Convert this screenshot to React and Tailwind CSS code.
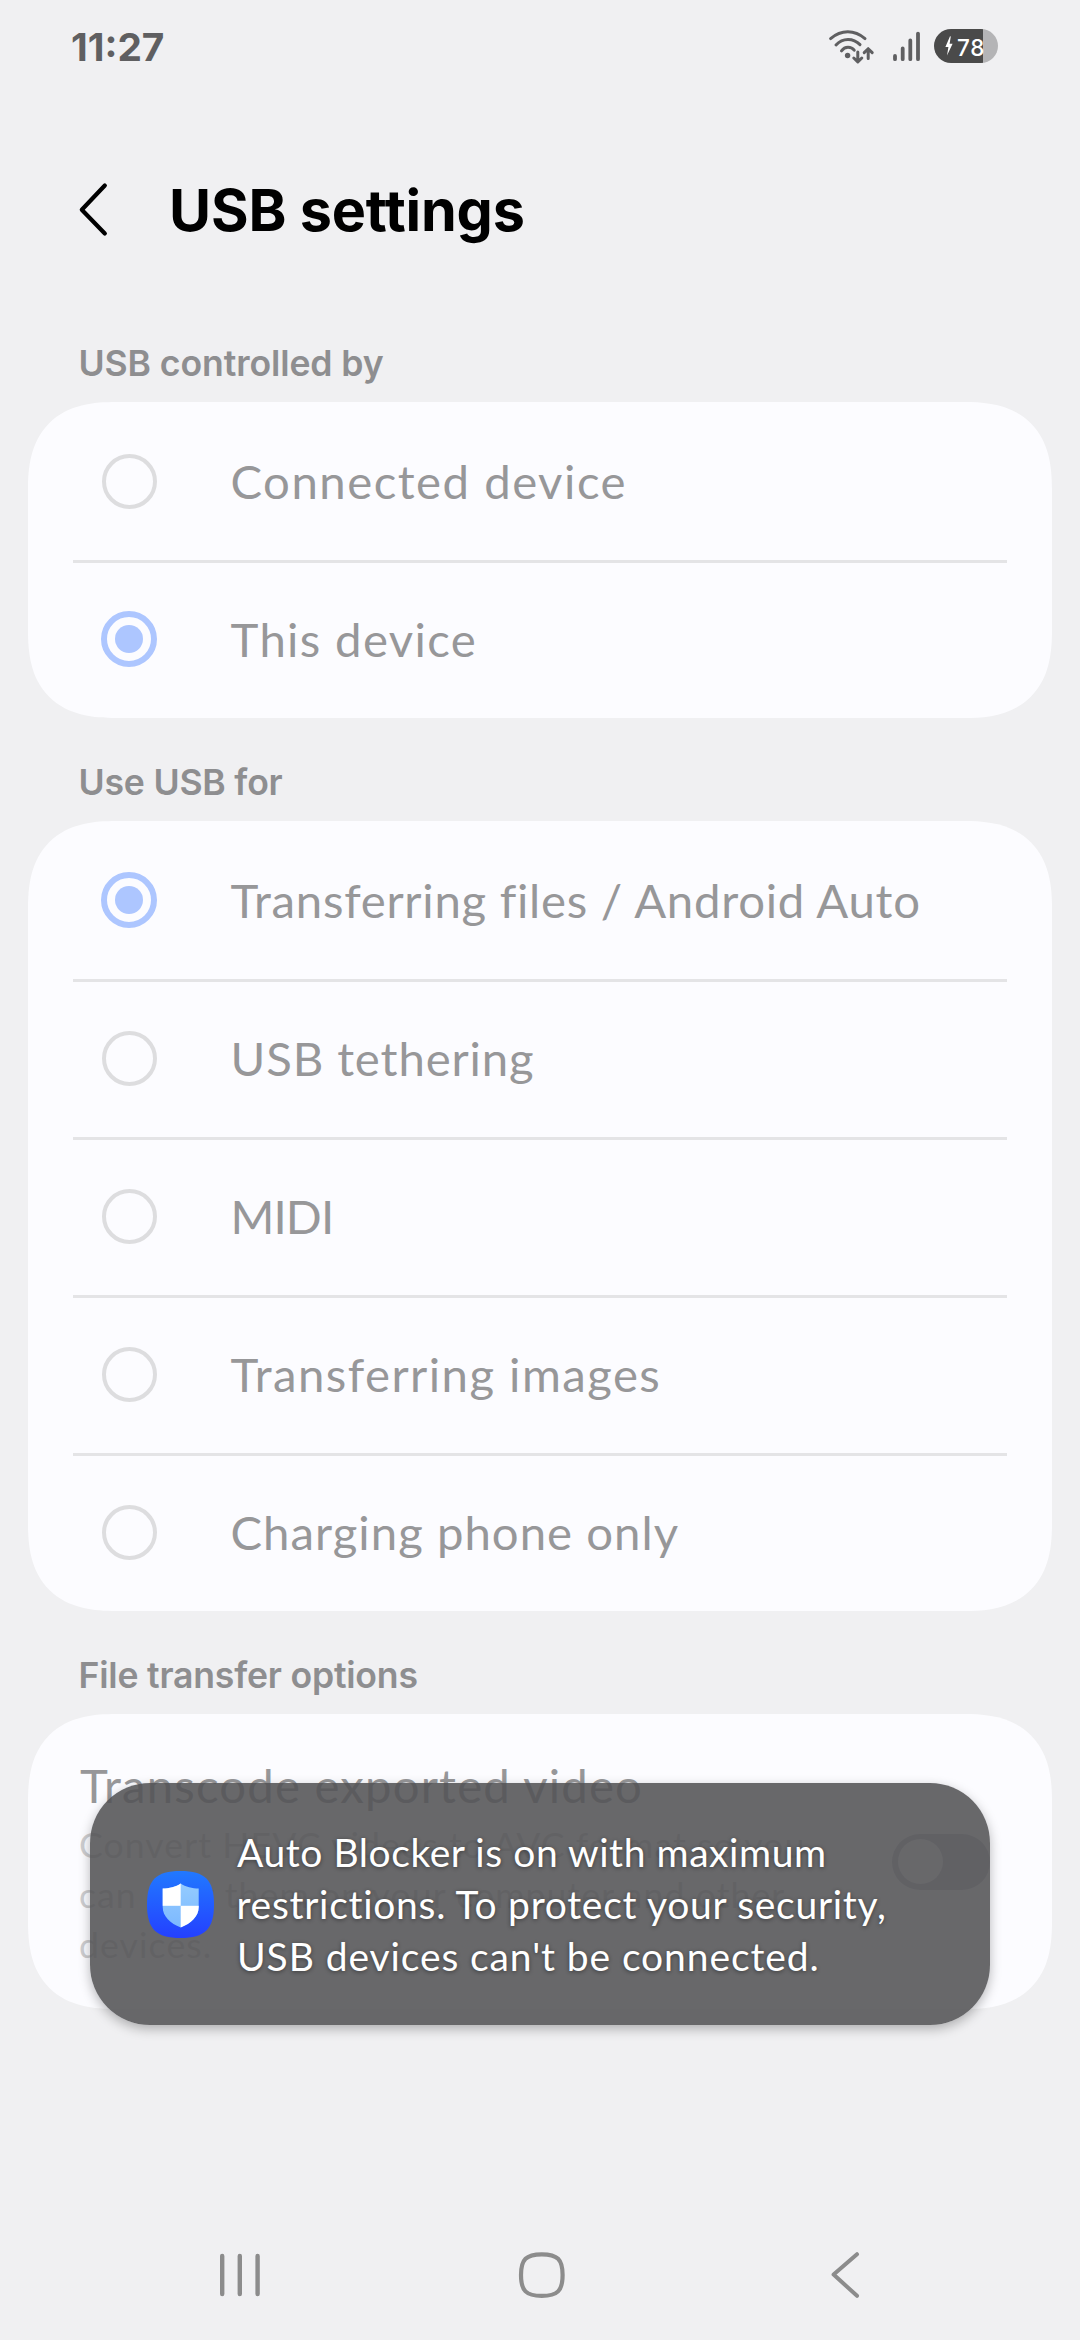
function StatusIcons() {
  return (
    <div className="flex h-[34px] items-start">
      <svg width="48" height="36" viewBox="828 29 48 36" fill="none" stroke="#5f5f61" strokeWidth="3" strokeLinecap="round" strokeLinejoin="round">
        <path d="M830.6 38.6Q838.5 31.7 847.8 31.7T865 38.6" />
        <path d="M836 45Q841 39.4 848 39.4T860 44.6" />
        <path d="M841.5 50.8Q844 47.2 848 47.2T854.2 50.2" />
        <circle cx="847.6" cy="55.5" r="2.7" fill="#5f5f61" stroke="none" />
        <path d="M857.8 52V61.5M853.8 58L857.8 61.9L861.8 58" />
        <path d="M868.2 58.6V49M864.2 52.6L868.2 48.7L872.2 52.6" />
      </svg>
      <svg className="ml-[16px]" width="30" height="36" viewBox="892 29 30 36" stroke="#5f5f61" strokeWidth="3.8" strokeLinecap="round">
        <path d="M895 56V59.2M902.7 48.5V59.2M910.3 40.5V59.2M918 33.6V59.2" />
      </svg>
      <div className="ml-[12px] flex h-[34px] w-[64px] items-center overflow-hidden rounded-[17px] bg-[linear-gradient(90deg,#4a4a4a_49px,#b4b4b6_49px)]">
        <svg className="ml-[11px] shrink-0" width="8" height="20" viewBox="0 0 8 20">
          <path d="M5 0.3L0.4 11H3.4L2 19.6L7.6 7.8H4.6L5.8 0.6Z" fill="#fff" />
        </svg>
        <span className="mt-[3px] ml-[4px] font-['Inter'] text-[22.5px] leading-[30px] font-medium tracking-[0.6px] text-white">78</span>
      </div>
    </div>
  );
}

function Radio({ checked }) {
  return checked ? (
    <span className="flex size-[56px] items-center justify-center rounded-full border-[6px] border-[#adc6ff]">
      <span className="size-[28px] rounded-full bg-[#adc6ff]" />
    </span>
  ) : (
    <span className="flex size-[56px] items-center justify-center">
      <span className="size-[55px] rounded-full border-[4px] border-[#dddddf]" />
    </span>
  );
}

function Option({ label, tracking, checked, divided }) {
  return (
    <div className="flex h-[158px] flex-col">
      {divided && <div className="mr-[45px] -mb-[3px] ml-[45px] h-[3px] shrink-0 bg-[#e4e4e6]" />}
      <div className="flex h-[158px] items-center pl-[73px]">
        <Radio checked={checked} />
        <span className={"ml-[73.5px] text-[47.3px] leading-[58px] whitespace-nowrap text-[#979799] " + tracking}>{label}</span>
      </div>
    </div>
  );
}

function Section({ title, tracking, children }) {
  return (
    <section>
      <h2 className={"flex h-[103px] items-end pb-[16px] pl-[78.5px] font-['Inter'] text-[35.6px] leading-[44px] font-semibold text-[#8e8e90] " + tracking}>
        {title}
      </h2>
      <div className="mx-[28px] rounded-[88px] bg-[#fcfcff] [corner-shape:superellipse(1.33)]">{children}</div>
    </section>
  );
}

function ShieldIcon() {
  return (
    <svg width="67" height="67" viewBox="0 0 67 67" className="shrink-0">
      <defs>
        <linearGradient id="shieldBg" x1="0" y1="0" x2="0" y2="1">
          <stop offset="0" stopColor="#2179ff" />
          <stop offset="1" stopColor="#2440ff" />
        </linearGradient>
        <linearGradient id="shieldLight" x1="0" y1="0" x2="0" y2="1">
          <stop offset="0" stopColor="#94ccff" />
          <stop offset="1" stopColor="#7cb8ff" />
        </linearGradient>
        <clipPath id="shieldShape">
          <path d="M33.7 12.5C29 15.8 22 17.6 15.7 17.6V36C15.7 45.5 23.5 52.5 33.7 56.5C43.9 52.5 51.7 45.5 51.7 36V17.6C45.4 17.6 38.4 15.8 33.7 12.5Z" />
        </clipPath>
      </defs>
      <path d="M33.5 0C58 0 67 9 67 33.5S58 67 33.5 67S0 58 0 33.5S9 0 33.5 0Z" fill="url(#shieldBg)" />
      <g clipPath="url(#shieldShape)">
        <rect x="15" y="12" width="37" height="45" fill="url(#shieldLight)" />
        <rect x="15" y="12" width="18.7" height="22.8" fill="#fff" />
        <rect x="33.7" y="34.8" width="19" height="22" fill="#fff" />
      </g>
    </svg>
  );
}

function Toast() {
  return (
    <div className="absolute top-[1783px] left-[90px] flex h-[242px] w-[900px] items-center rounded-[60px] bg-[#535355]/88 pl-[56.5px] shadow-[0_4px_12px_rgba(0,0,0,0.28)]">
      <ShieldIcon />
      <p className="ml-[23.5px] text-[39px] leading-[52px] whitespace-nowrap text-white [text-shadow:0_1px_4px_rgba(0,0,0,0.45)]">
        <span className="block tracking-[0.56px]">Auto Blocker is on with maximum</span>
        <span className="-ml-[0.5px] block tracking-[0.71px]">restrictions. To protect your security,</span>
        <span className="block tracking-[0.9px]">USB devices can't be connected.</span>
      </p>
    </div>
  );
}

function NavBar() {
  return (
    <nav className="flex h-[130px] items-center pb-px pl-[218px]">
      <svg width="44" height="50" viewBox="218 2250 44 50" stroke="#8c8c8c" strokeWidth="4.4" strokeLinecap="round">
        <path d="M222.2 2256V2294M239.8 2256V2294M257.6 2256V2294" />
      </svg>
      <svg className="ml-[254px]" width="52" height="50" viewBox="516 2250 52 50" fill="none" stroke="#8c8c8c" strokeWidth="4.2">
        <path d="M541.8 2254.3C557.5 2254.3 562.6 2259.4 562.6 2275.1S557.5 2295.9 541.8 2295.9S521 2290.8 521 2275.1S526.1 2254.3 541.8 2254.3Z" />
      </svg>
      <svg className="ml-[260px]" width="36" height="50" viewBox="828 2250 36 50" fill="none" stroke="#8c8c8c" strokeWidth="4" strokeLinecap="round" strokeLinejoin="round">
        <path d="M857 2254.2L833.6 2274.6L857 2295.8" />
      </svg>
    </nav>
  );
}

export default function App() {
  return (
    <div className="relative flex h-[2340px] w-[1080px] flex-col overflow-hidden bg-[#f0f0f2] font-['Lato',sans-serif]">
      <div className="flex h-[94px] items-center justify-between pr-[82px] pl-[71px]">
        <span className="font-['Inter'] text-[38.8px] leading-[46px] font-bold text-[#5f5f61]">11:27</span>
        <div className="-mt-[2px]">
          <StatusIcons />
        </div>
      </div>
      <header className="flex h-[205px] items-center pl-[76px]">
        <div className="mt-[26px] flex h-[60px] items-center">
          <svg width="34" height="56" viewBox="76 181.5 34 56" fill="none" stroke="#000" strokeWidth="4.2" strokeLinecap="round" strokeLinejoin="round">
            <path d="M104.8 185L81.8 209.3L104.8 233" />
          </svg>
          <h1 className="ml-[59px] font-['Inter'] text-[57.5px] leading-[60px] font-bold tracking-[-0.18px] text-black">USB settings</h1>
        </div>
      </header>

      <Section title="USB controlled by" tracking="tracking-[-0.1px]">
        <Option label="Connected device" tracking="tracking-[1.5px]" />
        <Option label="This device" tracking="tracking-[1.35px]" checked divided />
      </Section>
      <Section title="Use USB for" tracking="tracking-[-0.2px]">
        <Option label="Transferring files / Android Auto" tracking="tracking-[0.74px]" checked />
        <Option label="USB tethering" tracking="tracking-[0.88px]" divided />
        <Option label="MIDI" tracking="tracking-[-0.9px]" divided />
        <Option label="Transferring images" tracking="tracking-[1.46px]" divided />
        <Option label="Charging phone only" tracking="tracking-[1.02px]" divided />
      </Section>
      <Section title="File transfer options" tracking="tracking-[-0.2px]">
        <div className="flex h-[295px] items-center justify-between pr-[62px] pl-[52px]">
          <div className="mt-[42px] self-start whitespace-nowrap">
            <div className="text-[47.3px] leading-[58px] tracking-[1.19px] text-[#979799]">Transcode exported video</div>
            <p className="mt-[6px] -ml-[1px] text-[35.6px] leading-[50px] tracking-[1.1px] text-[#cdcdcf]">
              Convert HEVC videos to AVC format so you
              <br />
              can play them on your computer and other
              <br />
              devices.
            </p>
          </div>
          <div className="flex h-[56px] w-[98px] items-center rounded-full bg-[#c4c4ce] pl-[5.5px]">
            <div className="size-[45px] rounded-full bg-[#fcfcff]" />
          </div>
        </div>
      </Section>

      <div className="grow" />
      <NavBar />
      <Toast />
    </div>
  );
}
